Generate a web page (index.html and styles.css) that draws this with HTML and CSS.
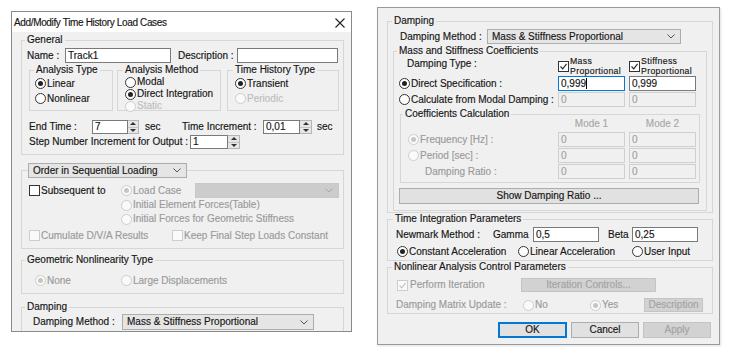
FILE: index.html
```html
<!DOCTYPE html>
<html lang="en">
<head>
<meta charset="utf-8">
<title>Add/Modify Time History Load Cases</title>
<link rel="stylesheet" href="styles.css">
</head>
<body>
<section class="dlg dlg-left">
  <header class="titlebar">
    <span class="title">Add/Modify Time History Load Cases</span>
    <svg class="close" width="10" height="10" viewBox="0 0 10 10"><path d="M0.5 0.5L9.5 9.5M9.5 0.5L0.5 9.5" stroke="#222" stroke-width="1.1" fill="none"/></svg>
  </header>
  <div class="body body-left">
    <div class="grp g-general">
      <div class="gt">General</div>
      <div class="row r-name">
        <span class="lbl w-name">Name :</span>
        <span class="inp w-namein">Track1</span>
        <span class="lbl w-desc">Description :</span>
        <span class="inp w-descin"></span>
      </div>
      <div class="subgroups">
        <div class="grp sg sg-type">
          <div class="gt">Analysis Type</div>
          <div class="opt o1"><span class="radio on"></span><span>Linear</span></div>
          <div class="opt o2"><span class="radio"></span><span>Nonlinear</span></div>
        </div>
        <div class="grp sg sg-method">
          <div class="gt">Analysis Method</div>
          <div class="opt"><span class="radio"></span><span>Modal</span></div>
          <div class="opt"><span class="radio on"></span><span>Direct Integration</span></div>
          <div class="opt dis2"><span class="radio dis"></span><span>Static</span></div>
        </div>
        <div class="grp sg sg-hist">
          <div class="gt">Time History Type</div>
          <div class="opt o1"><span class="radio on"></span><span>Transient</span></div>
          <div class="opt o2 dis2"><span class="radio dis"></span><span>Periodic</span></div>
        </div>
      </div>
      <div class="row r-end">
        <span class="lbl w-end">End Time :</span>
        <span class="inp w-endin">7</span>
        <span class="spin spin11"><i class="up"></i><i class="dn"></i></span>
        <span class="lbl sec1">sec</span>
        <span class="lbl w-ti">Time Increment :</span>
        <span class="inp w-tiin">0,01</span>
        <span class="spin"><i class="up"></i><i class="dn"></i></span>
        <span class="lbl sec2">sec</span>
      </div>
      <div class="row r-step">
        <span class="lbl w-step">Step Number Increment for Output :</span>
        <span class="inp w-stepin">1</span>
        <span class="spin"><i class="up"></i><i class="dn"></i></span>
      </div>
    </div>

    <div class="grp g-order">
      <span class="dd dd-order"><span>Order in Sequential Loading</span><svg width="8" height="5" viewBox="0 0 8 5"><path d="M0.5 0.5L4 4L7.5 0.5" fill="none" stroke="#555"/></svg></span>
      <div class="seq">
        <div class="opt seq-left"><span class="cb"></span><span>Subsequent to</span></div>
        <div class="seq-right">
          <div class="seq-r1">
            <div class="opt dis1 lc-w"><span class="radio dis on"></span><span>Load Case</span></div>
            <span class="dd dd-lc"><span></span><svg width="8" height="5" viewBox="0 0 8 5"><path d="M0.5 0.5L4 4L7.5 0.5" fill="none" stroke="#a8a8a8"/></svg></span>
          </div>
          <div class="opt dis1 seq-r2"><span class="radio dis"></span><span>Initial Element Forces(Table)</span></div>
          <div class="opt dis1 seq-r3"><span class="radio dis"></span><span>Initial Forces for Geometric Stiffness</span></div>
        </div>
      </div>
      <div class="row r-cum">
        <div class="opt dis1 cum1"><span class="cb dis"></span><span>Cumulate D/V/A Results</span></div>
        <div class="opt dis1"><span class="cb dis"></span><span>Keep Final Step Loads Constant</span></div>
      </div>
    </div>

    <div class="grp g-geo">
      <div class="gt">Geometric Nonlinearity Type</div>
      <div class="row r-none">
        <div class="opt dis1 none-w"><span class="radio dis on"></span><span>None</span></div>
        <div class="opt dis1"><span class="radio dis"></span><span>Large Displacements</span></div>
      </div>
    </div>

    <div class="grp g-damp-l">
      <div class="gt">Damping</div>
      <div class="row r-dm">
        <span class="lbl w-dm">Damping Method :</span>
        <span class="dd dd-dm"><span>Mass &amp; Stiffness Proportional</span><svg width="8" height="5" viewBox="0 0 8 5"><path d="M0.5 0.5L4 4L7.5 0.5" fill="none" stroke="#555"/></svg></span>
      </div>
    </div>
  </div>
</section>

<section class="dlg dlg-right">
  <div class="body body-right">
    <div class="grp g-damp-r">
      <div class="gt">Damping</div>
      <div class="row r-dmr">
        <span class="lbl w-dmr">Damping Method :</span>
        <span class="dd dd-dmr"><span>Mass &amp; Stiffness Proportional</span><svg width="8" height="5" viewBox="0 0 8 5"><path d="M0.5 0.5L4 4L7.5 0.5" fill="none" stroke="#555"/></svg></span>
      </div>
      <div class="grp g-mass">
        <div class="gt">Mass and Stiffness Coefficients</div>
        <div class="row r-dt">
          <span class="lbl w-dt">Damping Type :</span>
          <div class="colc"><span class="cb on"><svg width="9" height="9" viewBox="0 0 9 9"><path d="M1.5 4.5L3.7 6.8L7.6 1.8" fill="none" stroke="#222" stroke-width="1.1"/></svg></span><span class="two"><span>Mass</span><span>Proportional</span></span></div>
          <div class="colc colgap"><span class="cb on"><svg width="9" height="9" viewBox="0 0 9 9"><path d="M1.5 4.5L3.7 6.8L7.6 1.8" fill="none" stroke="#222" stroke-width="1.1"/></svg></span><span class="two"><span>Stiffness</span><span>Proportional</span></span></div>
        </div>
        <div class="row r-ds">
          <div class="opt mlab"><span class="radio on"></span><span>Direct Specification :</span></div>
          <span class="inp inp67 focus">0,999<span class="caret"></span></span>
          <span class="inp inp67 colgap">0,999</span>
        </div>
        <div class="row r-ds">
          <div class="opt mlab"><span class="radio"></span><span>Calculate from Modal Damping :</span></div>
          <span class="inp inp67 dis">0</span>
          <span class="inp inp67 colgap dis">0</span>
        </div>
        <div class="grp g-coef">
          <div class="gt">Coefficients Calculation</div>
          <div class="row r-mode">
            <span class="mode">Mode 1</span>
            <span class="mode colgap">Mode 2</span>
          </div>
          <div class="row r-c r-c1">
            <div class="clab"><div class="opt dis1"><span class="radio dis on"></span><span>Frequency [Hz] :</span></div></div>
            <span class="inp inp67 dis">0</span>
            <span class="inp inp67 colgap dis">0</span>
          </div>
          <div class="row r-c">
            <div class="clab"><div class="opt dis1"><span class="radio dis"></span><span>Period [sec] :</span></div></div>
            <span class="inp inp67 dis">0</span>
            <span class="inp inp67 colgap dis">0</span>
          </div>
          <div class="row r-c">
            <div class="clab"><span class="dis1 ratio">Damping Ratio :</span></div>
            <span class="inp inp67 dis">0</span>
            <span class="inp inp67 colgap dis">0</span>
          </div>
        </div>
        <div class="btn btn-show">Show Damping Ratio ...</div>
      </div>
    </div>

    <div class="grp g-time">
      <div class="gt">Time Integration Parameters</div>
      <div class="row r-nm">
        <span class="lbl w-nm">Newmark Method :</span>
        <span class="lbl w-gamma">Gamma</span>
        <span class="inp inp66">0,5</span>
        <span class="lbl w-beta">Beta</span>
        <span class="inp inp66">0,25</span>
      </div>
      <div class="row r-acc">
        <div class="opt acc1"><span class="radio on"></span><span>Constant Acceleration</span></div>
        <div class="opt acc2"><span class="radio"></span><span>Linear Acceleration</span></div>
        <div class="opt"><span class="radio"></span><span>User Input</span></div>
      </div>
    </div>

    <div class="grp g-nl">
      <div class="gt">Nonlinear Analysis Control Parameters</div>
      <div class="row r-pi">
        <div class="opt dis1 pi-w"><span class="cb dis on"><svg width="9" height="9" viewBox="0 0 9 9"><path d="M1.5 4.5L3.7 6.8L7.6 1.8" fill="none" stroke="#c4c4c4" stroke-width="1.1"/></svg></span><span>Perform Iteration</span></div>
        <div class="btn dis btn-ic">Iteration Controls...</div>
      </div>
      <div class="row r-dmu">
        <span class="lbl dis1 w-dmu">Damping Matrix Update :</span>
        <div class="opt dis1 no-w"><span class="radio dis"></span><span>No</span></div>
        <div class="opt dis1 yes-w"><span class="radio dis on"></span><span>Yes</span></div>
        <div class="btn dis btn-desc">Description</div>
      </div>
    </div>

    <div class="row r-btns">
      <div class="btn def btn-ok">OK</div>
      <div class="btn btn-cancel">Cancel</div>
      <div class="btn dis btn-apply">Apply</div>
    </div>
  </div>
</section>
</body>
</html>
```

FILE: styles.css
```css
* { box-sizing: border-box; }
html, body { margin: 0; padding: 0; }
body {
  position: relative;
  width: 734px;
  height: 361px;
  overflow: hidden;
  background: #fff;
  font-family: "Liberation Sans", Arial, sans-serif;
  font-size: 10px;
  line-height: 12px;
  color: #151515;
  -webkit-text-stroke: 0.15px currentColor;
}

/* dialog windows */
.dlg {
  position: absolute;
  display: flex;
  flex-direction: column;
  border: 1px solid #8a8a8a;
  background: #f0f0f0;
  overflow: hidden;
}
.dlg-left { left: 11px; top: 11px; width: 341px; height: 321px; }
.dlg-right { left: 377px; top: 7px; width: 343px; height: 338px; border-color: #9a9a9a; box-shadow: 1px 1px 2px rgba(0,0,0,.12); }

.titlebar {
  flex: none;
  height: 20px;
  background: #fff;
  display: flex;
  align-items: center;
  justify-content: space-between;
  padding: 0 6px 0 2px;
}
.title { letter-spacing: -0.35px; margin-top: 1px; }
.close { display: block; margin-top: 1px; }

.body {
  flex: 1;
  min-height: 0;
  overflow: hidden;
  display: flex;
  flex-direction: column;
  align-items: flex-start;
}
.body-left { padding: 0 0 0 9px; }
.body-right { padding: 7px 0 0 9px; }

/* group boxes: border line runs through the middle of the title */
.grp {
  flex: none;
  border: 1px solid #d6d6d6;
}
.gt {
  width: max-content;
  height: 12px;
  line-height: 12px;
  margin-top: -7px;
  padding: 0 2px;
  background: #f0f0f0;
  white-space: nowrap;
}

.row { display: flex; align-items: center; flex: none; }
.lbl { flex: none; white-space: nowrap; }

.inp {
  flex: none;
  height: 100%;
  display: flex;
  align-items: center;
  background: #fff;
  border: 1px solid #7a7a7a;
  padding-left: 2px;
  white-space: nowrap;
}
.inp.focus { border-color: #0078d7; }
.inp.dis { background: #f0f0f0; border-color: #cfcfcf; color: #a0a0a0; }
.caret { display: inline-block; width: 1px; height: 11px; background: #000; }

.opt { display: flex; align-items: center; gap: 1px; white-space: nowrap; flex: none; }
.dis1 { color: #9a9a9a; }
.dis2 { color: #bdbdbd; }

.radio {
  flex: none;
  width: 11px;
  height: 11px;
  border-radius: 50%;
  border: 1px solid #333;
  background: #fff;
  display: inline-flex;
  align-items: center;
  justify-content: center;
}
.radio.on::after { content: ""; width: 5px; height: 5px; border-radius: 50%; background: #222; }
.radio.dis { border-color: #cdcdcd; background: #fafafa; }
.radio.dis.on::after { background: #c6c6c6; }

.cb {
  flex: none;
  width: 11px;
  height: 11px;
  border: 1px solid #333;
  background: #fff;
  display: inline-flex;
  align-items: center;
  justify-content: center;
}
.cb.dis { border-color: #cdcdcd; background: #fafafa; }
.cb svg { display: block; }

.dd {
  flex: none;
  display: flex;
  align-items: center;
  justify-content: space-between;
  padding: 0 5px 0 4px;
  background: #e5e5e5;
  border: 1px solid #adadad;
  white-space: nowrap;
  color: #151515;
}
.dd svg { display: block; flex: none; }

.spin {
  flex: none;
  width: 12px;
  height: 100%;
  display: flex;
  flex-direction: column;
  background: #e6e6e6;
  border: 1px solid #b5b5b5;
  border-left: none;
}
.spin11 { width: 11px; }
.spin i { flex: 1; display: flex; align-items: center; justify-content: center; }
.spin i::after { content: ""; border-left: 3px solid transparent; border-right: 3px solid transparent; }
.spin .up { border-bottom: 1px solid #c4c4c4; }
.spin .up::after { border-bottom: 3px solid #333; }
.spin .dn::after { border-top: 3px solid #333; }

.btn {
  flex: none;
  display: flex;
  align-items: center;
  justify-content: center;
  background: #e1e1e1;
  border: 1px solid #adadad;
  white-space: nowrap;
}
.btn.def { border-color: #0078d7; box-shadow: inset 0 0 0 1px #0078d7; }
.btn.dis { background: #d2d2d2; border-color: #c4c4c4; color: #a3a3a3; }

/* ---------- left dialog ---------- */
.g-general { margin-top: 8px; width: 323px; height: 115px; }
.g-general > .gt { margin-left: 3px; }
.r-name { margin-top: 2px; height: 15px; padding-left: 5px; }
.w-name { width: 38px; }
.w-namein { width: 106px; }
.w-desc { width: 59px; margin-left: 7px; }
.w-descin { width: 101px; }

.subgroups { display: flex; align-items: flex-start; margin-top: 7px; }
.sg { height: 41px; }
.sg-type { margin-left: 7px; width: 84px; }
.sg-type > .gt { margin-left: 4px; }
.sg-method { margin-left: 4px; width: 104px; }
.sg-method > .gt { margin-left: 5px; }
.sg-hist { margin-left: 6px; width: 112px; }
.sg-hist > .gt { margin-left: 5px; }
.sg-type .opt { margin-left: 5px; height: 13px; }
.sg-hist .opt { margin-left: 7px; height: 13px; }
.sg-type .o1, .sg-hist .o1 { margin-top: 1px; }
.sg-type .o2, .sg-hist .o2 { margin-top: 2px; }
.sg-method .opt { margin-left: 7px; height: 12px; }

.r-end { margin-top: 9px; height: 14px; padding-left: 7px; }
.w-end { width: 63px; }
.w-endin { width: 36px; }
.sec1 { margin-left: 6px; width: 37px; }
.w-ti { width: 81px; }
.w-tiin { width: 37px; }
.sec2 { margin-left: 5px; }
.r-step { margin-top: 1px; height: 14px; padding-left: 7px; }
.w-step { width: 161px; }
.w-stepin { width: 38px; }

.g-order { margin-top: 15px; width: 323px; height: 79px; }
.dd-order { margin: -8px 0 0 6px; width: 159px; height: 15px; }
.seq { display: flex; align-items: flex-start; margin-top: 5px; height: 43px; }
.seq-left { margin-left: 7px; width: 92px; height: 15px; }
.seq-right { display: flex; flex-direction: column; }
.seq-r1 { height: 15px; display: flex; align-items: center; }
.lc-w { width: 74px; }
.dd-lc { width: 144px; height: 15px; background: #cccccc; border-color: #c8c8c8; }
.seq-r2, .seq-r3 { height: 14px; }
.r-cum { margin-top: 3px; height: 13px; padding-left: 7px; }
.cum1 { width: 143px; }

.g-geo { margin-top: 11px; width: 323px; height: 34px; }
.g-geo > .gt { margin-left: 3px; }
.r-none { margin-top: 8px; height: 13px; padding-left: 13px; }
.none-w { width: 86px; }

.g-damp-l { margin-top: 13px; width: 323px; height: 54px; }
.g-damp-l > .gt { margin-left: 3px; }
.r-dm { margin-top: 1px; height: 16px; padding-left: 11px; }
.w-dm { width: 89px; }
.dd-dm { width: 192px; height: 16px; }

/* ---------- right dialog ---------- */
.g-damp-r { margin-top: 6px; width: 326px; height: 192px; }
.g-damp-r > .gt { margin-left: 4px; }
.r-dmr { margin-top: 2px; height: 15px; padding-left: 12px; }
.w-dmr { width: 87px; }
.dd-dmr { width: 194px; height: 15px; }

.g-mass { margin: 7px 0 0 5px; width: 314px; height: 160px; }
.g-mass > .gt { margin-left: 3px; }
.r-dt { height: 18px; }
.w-dt { margin-left: 13px; width: 151px; align-self: flex-start; margin-top: 1px; }
.colc { flex: none; width: 67px; display: flex; align-items: center; gap: 1px; }
.colgap { margin-left: 4px; }
.two { display: flex; flex-direction: column; font-size: 8.7px; line-height: 10px; letter-spacing: 0.35px; margin-top: -1px; }
.two > span { display: block; height: 10px; }
.r-ds { margin-top: 1px; height: 15px; }
.mlab { margin-left: 5px; width: 159px; }
.inp67 { width: 67px; }

.g-coef { margin: 7px 0 0 6px; width: 300px; height: 69px; }
.g-coef > .gt { margin-left: 2px; }
.r-mode { margin-top: -2px; height: 12px; padding-left: 157px; color: #a8a8a8; }
.mode { flex: none; width: 67px; text-align: center; }
.r-c { margin-top: 1px; height: 15px; }
.r-c1 { margin-top: 2px; }
.clab { flex: none; width: 157px; display: flex; align-items: center; }
.clab .opt { margin-left: 7px; }
.ratio { margin-left: 24px; white-space: nowrap; }
.btn-show { margin: 5px 0 0 5px; width: 300px; height: 16px; }

.g-time { margin-top: 6px; width: 326px; height: 42px; }
.g-time > .gt { margin-left: 5px; }
.r-nm { margin-top: 2px; height: 15px; padding-left: 8px; }
.w-nm { width: 97px; }
.w-gamma { width: 40px; }
.inp66 { width: 66px; }
.w-beta { margin-left: 9px; width: 24px; }
.r-acc { margin-top: 3px; height: 13px; padding-left: 9px; }
.acc1 { width: 121px; }
.acc2 { width: 114px; }

.g-nl { margin-top: 6px; width: 326px; height: 47px; }
.g-nl > .gt { margin-left: 4px; }
.r-pi { margin-top: 5px; height: 14px; padding-left: 9px; }
.pi-w { width: 124px; gap: 2px; }
.btn-ic { width: 135px; height: 14px; }
.r-dmu { margin-top: 6px; height: 14px; padding-left: 8px; }
.w-dmu { width: 127px; }
.no-w { width: 67px; }
.yes-w { width: 54px; }
.btn-desc { width: 59px; height: 14px; }

.r-btns { margin-top: 8px; height: 16px; align-self: stretch; justify-content: flex-end; padding-right: 8px; gap: 4px; }
.btn-ok { width: 69px; height: 16px; }
.btn-cancel, .btn-apply { width: 68px; height: 16px; }
```
